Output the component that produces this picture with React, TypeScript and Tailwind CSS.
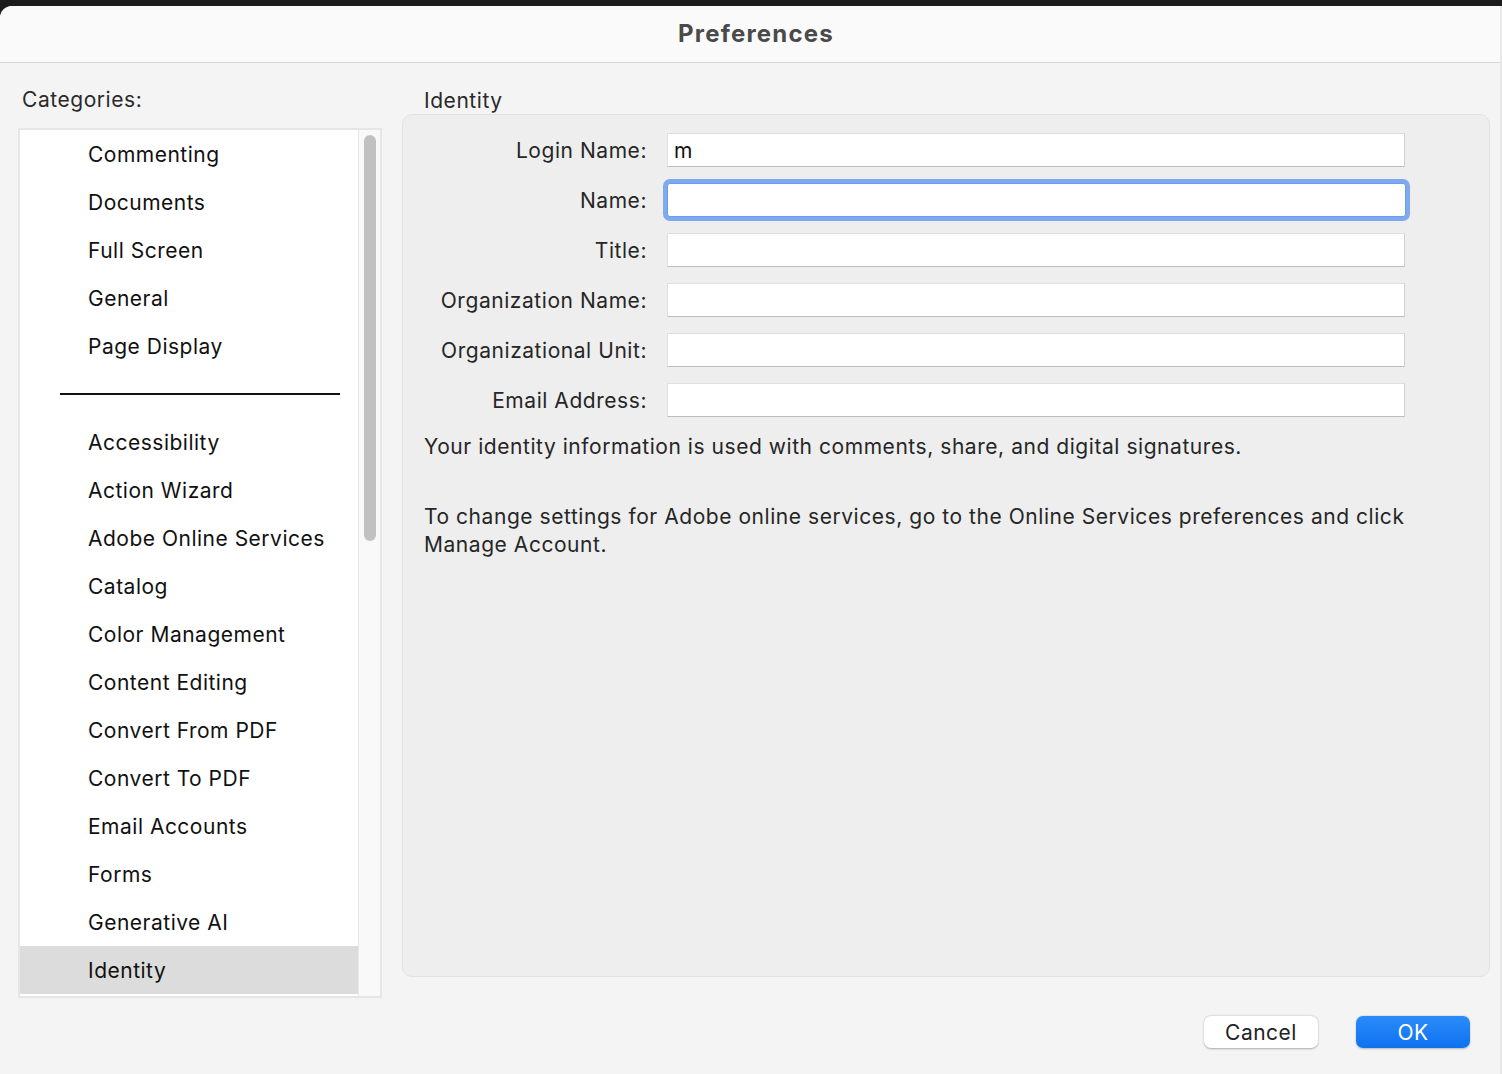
const topCategories = ['Commenting', 'Documents', 'Full Screen', 'General', 'Page Display']

const moreCategories = [
  'Accessibility',
  'Action Wizard',
  'Adobe Online Services',
  'Catalog',
  'Color Management',
  'Content Editing',
  'Convert From PDF',
  'Convert To PDF',
  'Email Accounts',
  'Forms',
  'Generative AI',
  'Identity',
]

const fields = [
  { label: 'Login Name:', value: 'm' },
  { label: 'Name:', value: '', focused: true },
  { label: 'Title:', value: '' },
  { label: 'Organization Name:', value: '' },
  { label: 'Organizational Unit:', value: '' },
  { label: 'Email Address:', value: '' },
]

function CategoryRow({ name, selected }: { name: string; selected?: boolean }) {
  return (
    <div className={`h-[48px] shrink-0 flex items-center pt-[2px] pl-[68px] text-[21px] tracking-[0.5px] text-[#111] ${selected ? 'bg-[#dcdcdc]' : ''}`}>
      {name}
    </div>
  )
}

function CategoryList() {
  return (
    <div className="mt-[14px] h-[870px] w-[364px] border-2 border-[#e6e6e6] flex">
      <div className="flex-1 bg-white overflow-hidden flex flex-col">
        {topCategories.map(c => (
          <CategoryRow key={c} name={c} />
        ))}
        <div className="h-[48px] shrink-0 flex items-center">
          <div className="ml-[40px] w-[280px] h-[2px] bg-[#111]" />
        </div>
        {moreCategories.map(c => (
          <CategoryRow key={c} name={c} selected={c === 'Identity'} />
        ))}
      </div>
      {/* scrollbar */}
      <div className="w-[22px] border-l border-[#e8e8e8] bg-[#f9f9f9] pt-[5px] pl-[5px]">
        <div className="w-[12px] h-[406px] rounded-full bg-[#c1c1c1]" />
      </div>
    </div>
  )
}

function Field({ value, focused }: { value: string; focused?: boolean }) {
  if (focused) {
    return (
      <div className="h-[34px] w-[739px] rounded-[3px] border border-[#6d9be6] bg-white shadow-[0_0_0_4px_#80aaf0]" />
    )
  }
  return (
    <div className="h-[34px] w-[738px] bg-white border border-[#e0e0e0] border-b-[#bdbdbd] border-r-[#cfcfcf] flex items-center pt-[2px] pl-[6px] text-[21px] text-[#111]">
      {value}
    </div>
  )
}

export default function App() {
  return (
    <div className="w-[1502px] h-[1074px] bg-[#1c1c1c] pt-[6px] overflow-hidden" style={{ fontFamily: 'Inter, "Noto Sans", sans-serif' }}>
      <div className="h-full bg-[#f4f4f4] rounded-tl-[12px] overflow-hidden flex flex-col border-r-2 border-[#e9e9e9]">
        {/* Title bar */}
        <div className="h-[57px] shrink-0 bg-[#fafafa] border-b border-[#d6d6d6] flex items-center justify-center pl-[12px]">
          <span className="text-[24px] font-bold tracking-[1.2px] text-[#4a4a4a]">Preferences</span>
        </div>

        {/* Content */}
        <div className="flex h-[935px] shrink-0 tracking-[0.55px]">
          <div className="ml-[18px] w-[364px] pt-[23px]">
            <div className="h-[28px] leading-[28px] pl-[4px] text-[21px] text-[#2a2a2a]">Categories:</div>
            <CategoryList />
          </div>

          <div className="ml-[20px] w-[1088px] pt-[24px]">
            <div className="h-[27px] leading-[28px] pl-[22px] text-[21px] text-[#2a2a2a]">Identity</div>
            <div className="h-[863px] rounded-[10px] border border-[#e2e2e2] bg-[#eeeeee] pt-[10px]">
              <div className="flex flex-col">
                {fields.map(f => (
                  <div key={f.label} className="h-[50px] flex items-center">
                    <div className="w-[244px] pt-[2px] text-right text-[21px] text-[#262626]">{f.label}</div>
                    <div className="ml-[20px]">
                      <Field value={f.value} focused={f.focused} />
                    </div>
                  </div>
                ))}
              </div>
              <div className="pl-[21px] pr-[60px] mt-[8px] text-[21px] leading-[28px] text-[#262626]">
                <p>Your identity information is used with comments, share, and digital signatures.</p>
                <p className="mt-[42px]">
                  To change settings for Adobe online services, go to the Online Services preferences and click Manage Account.
                </p>
              </div>
            </div>
          </div>
        </div>

        {/* Buttons */}
        <div className="mt-[18px] flex justify-end gap-[38px] pr-[30px] tracking-[0.5px]">
          <button className="h-[32px] w-[114px] pt-[1px] rounded-[7px] bg-white text-[21px] text-[#222] shadow-[0_0.5px_2px_rgba(0,0,0,0.3)]">
            Cancel
          </button>
          <button className="h-[32px] w-[114px] pt-[1px] rounded-[7px] bg-gradient-to-b from-[#2a8bfa] to-[#0d72f0] text-[21px] text-white shadow-[0_0.5px_2px_rgba(0,0,0,0.25)]">
            OK
          </button>
        </div>
      </div>
    </div>
  )
}
